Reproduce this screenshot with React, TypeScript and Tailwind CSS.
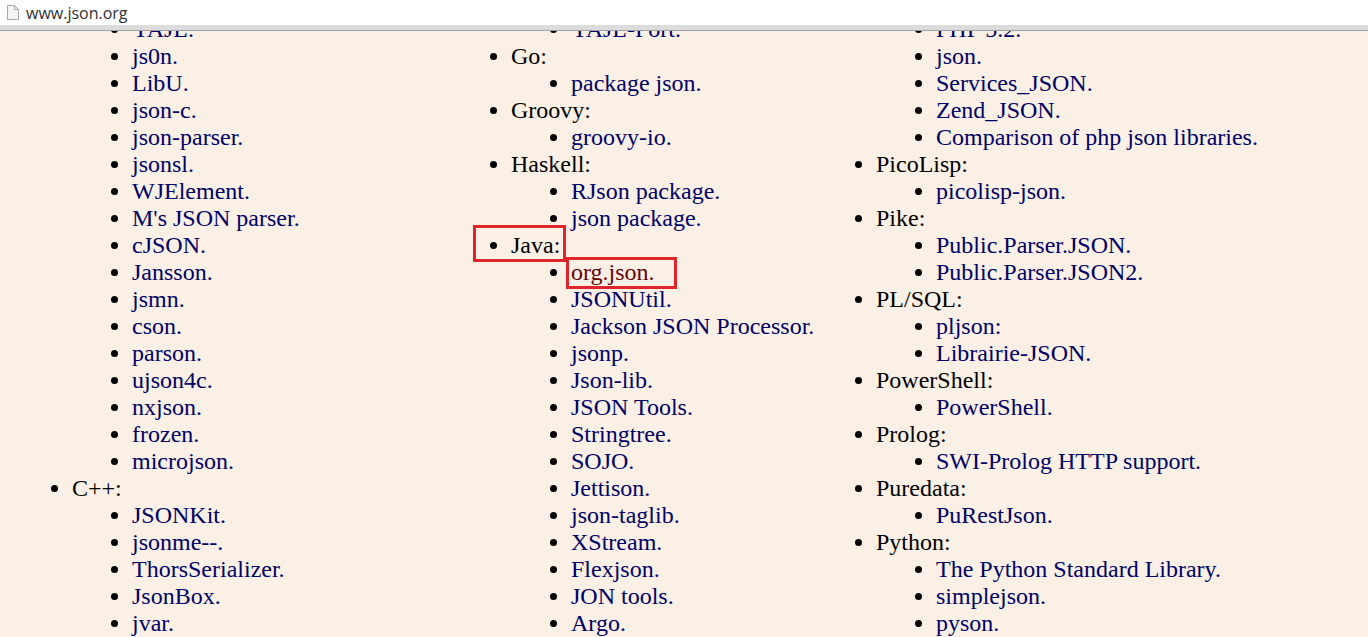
const serif = "font-['Liberation_Serif',serif]";

type Group = { label?: string; items: string[] };

const col1: Group[] = [
  { items: ["YAJL.", "js0n.", "LibU.", "json-c.", "json-parser.", "jsonsl.", "WJElement.", "M's JSON parser.", "cJSON.", "Jansson.", "jsmn.", "cson.", "parson.", "ujson4c.", "nxjson.", "frozen.", "microjson."] },
  { label: "C++:", items: ["JSONKit.", "jsonme--.", "ThorsSerializer.", "JsonBox.", "jvar."] },
];
const col2: Group[] = [
  { items: ["YAJL-Port."] },
  { label: "Go:", items: ["package json."] },
  { label: "Groovy:", items: ["groovy-io."] },
  { label: "Haskell:", items: ["RJson package.", "json package."] },
  { label: "Java:", items: ["org.json.", "JSONUtil.", "Jackson JSON Processor.", "jsonp.", "Json-lib.", "JSON Tools.", "Stringtree.", "SOJO.", "Jettison.", "json-taglib.", "XStream.", "Flexjson.", "JON tools.", "Argo."] },
];
const col3: Group[] = [
  { items: ["PHP 5.2.", "json.", "Services_JSON.", "Zend_JSON.", "Comparison of php json libraries."] },
  { label: "PicoLisp:", items: ["picolisp-json."] },
  { label: "Pike:", items: ["Public.Parser.JSON.", "Public.Parser.JSON2."] },
  { label: "PL/SQL:", items: ["pljson:", "Librairie-JSON."] },
  { label: "PowerShell:", items: ["PowerShell."] },
  { label: "Prolog:", items: ["SWI-Prolog HTTP support."] },
  { label: "Puredata:", items: ["PuRestJson."] },
  { label: "Python:", items: ["The Python Standard Library.", "simplejson.", "pyson."] },
];

function Column({ groups, className }: { groups: Group[]; className: string }) {
  return (
    <ul className={`list-disc ${className}`}>
      {groups.map((g, i) => (
        <li key={i} className={g.label ? "" : "list-none"}>
          {g.label && <span>{g.label}</span>}
          <ul className="list-disc pl-[60px]">
            {g.items.map((it) => (
              <li key={it}>
                <span className={it === "org.json." ? "text-[#660000]" : "text-[#000066]"}>{it}</span>
              </li>
            ))}
          </ul>
        </li>
      ))}
    </ul>
  );
}

export default function App() {
  return (
    <div className={`h-[637px] w-[1368px] overflow-hidden bg-[#faf0e6] relative ${serif}`}>
      <header className="h-[31px] bg-white border-b border-[#a0a0a0] relative z-10 flex flex-col">
        <div className="h-[25px] flex items-center pl-[7px] gap-[7px] font-['Open_Sans',sans-serif] text-[16px] text-[#303030] shrink-0">
          <svg width="12" height="15" viewBox="0 0 12 15" fill="none">
            <path d="M.5 .5h7L11.5 4.5v10H.5z" fill="#f4f4f4" stroke="#a8a8a8" />
            <path d="M7.5 .5V4.5H11.5" fill="none" stroke="#a8a8a8" />
          </svg>
          <span>www.json.org</span>
        </div>
        <div className="flex-1 bg-[#dcdcdc]" />
      </header>
      <div className="flex items-start -mt-[15px] text-[24px] leading-[27px] text-black whitespace-nowrap">
        <Column groups={col1} className="w-[439px] shrink-0 pl-[72px]" />
        <Column groups={col2} className="w-[365px] shrink-0 pl-[72px]" />
        <Column groups={col3} className="shrink-0 pl-[72px]" />
      </div>
      <div className="absolute left-[473px] top-[225px] w-[93px] h-[37px] border-[3px] border-[#e0242c]" />
      <div className="absolute left-[566px] top-[257px] w-[111px] h-[32px] border-[3px] border-[#e0242c]" />
    </div>
  );
}
